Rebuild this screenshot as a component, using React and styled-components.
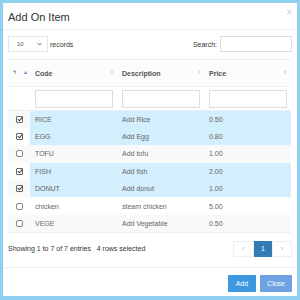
import React from "react";
import styled, { createGlobalStyle } from "styled-components";

const Global = createGlobalStyle`
  html, body { margin: 0; padding: 0; }
  body {
    width: 300px;
    height: 300px;
    background: #8dd0ef;
    font-family: "Liberation Sans", Arial, sans-serif;
    overflow: hidden;
  }
`;

const Modal = styled.div`
  box-sizing: border-box;
  margin: 3px 0 0 3px;
  width: 294px;
  height: 293px;
  background: #fff;
  display: flex;
  flex-direction: column;
`;

const Header = styled.div`
  height: 26px;
  border-bottom: 1px solid #eee;
  display: flex;
  align-items: center;
  justify-content: space-between;
  padding: 0 5px 0 5px;
`;

const Title = styled.div`
  font-size: 11px;
  color: #333;
  margin-top: 1px;
`;

const CloseX = styled.div`
  font-size: 10px;
  color: #ccc;
  margin-top: -8px;
`;

const Body = styled.div`
  padding: 6px 5px 0 5px;
  flex: 1;
`;

const Controls = styled.div`
  display: flex;
  justify-content: space-between;
  align-items: center;
  height: 16px;
  font-size: 7px;
  color: #333;
`;

const Length = styled.div`
  display: flex;
  align-items: center;
  gap: 2px;
`;

const SelectBox = styled.div`
  box-sizing: border-box;
  width: 40px;
  height: 16px;
  border: 1px solid #e3e3e3;
  display: flex;
  align-items: center;
  justify-content: space-between;
  padding: 0 5px 0 8px;
  font-size: 6px;
  color: #555;
`;

const Search = styled.div`
  display: flex;
  align-items: center;
  gap: 3px;
`;

const SearchInput = styled.div`
  box-sizing: border-box;
  width: 72px;
  height: 16px;
  border: 1px solid #ddd;
`;

const Table = styled.table`
  margin-top: 7px;
  width: 283px;
  border-collapse: collapse;
  table-layout: fixed;
  font-size: 7px;
  color: #666;
  border-top: 1px solid #eee;
  border-bottom: 1px solid #eee;
`;

const HeadCell = styled.th`
  height: 26px;
  padding: 0 0 0 5px;
  text-align: left;
  font-weight: bold;
  color: #555;
  position: relative;
  background: #fcfcfc;
  border-bottom: 1px solid #eee;
`;

const SortMark = styled.span`
  position: absolute;
  right: ${(p) => p.$right}px;
  top: 10px;
  font-size: 5px;
  color: ${(p) => p.$color};
  line-height: 1;
`;

const FilterCell = styled.td`
  height: 23px;
  padding: 0 5px;
  border-bottom: 1px solid #eee;
`;

const FilterInput = styled.div`
  box-sizing: border-box;
  height: 18px;
  width: 78px;
  border: 1px solid #ddd;
`;

const Row = styled.tr`
  height: 17.4px;
  background: ${(p) => (p.$striped ? "#f9f9f9" : "#fff")};
`;

const Cell = styled.td`
  padding: 0 0 0 5px;
  background: ${(p) => (p.$selected ? "#d3eefc" : "transparent")};
`;

const CheckCell = styled.td`
  padding: 0 0 0 8px;
`;

const Box = styled.span`
  box-sizing: border-box;
  display: block;
  width: 7px;
  height: 7px;
  border: 1px solid ${(p) => (p.$on ? "#666" : "#888")};
  border-radius: ${(p) => (p.$on ? "1px" : "2px")};
  position: relative;
  background: #fff;
`;

const Tick = styled.svg`
  position: absolute;
  left: -1px;
  top: -2px;
`;

const Bottom = styled.div`
  display: flex;
  justify-content: space-between;
  align-items: center;
  margin-top: 8px;
  height: 16px;
  font-size: 7px;
  color: #333;
`;

const Pager = styled.div`
  display: flex;
  height: 16px;
`;

const Page = styled.div`
  box-sizing: border-box;
  width: ${(p) => p.$w}px;
  height: 16px;
  display: flex;
  align-items: center;
  justify-content: center;
  font-size: 7px;
  border: 1px solid ${(p) => (p.$active ? "#337ab7" : "#eee")};
  background: ${(p) => (p.$active ? "#337ab7" : "#fff")};
  color: ${(p) => (p.$active ? "#fff" : "#aaa")};
`;

const Footer = styled.div`
  box-sizing: border-box;
  border-top: 1px solid #eee;
  height: 29px;
  display: flex;
  justify-content: flex-end;
  align-items: flex-start;
  gap: 4px;
  padding: 7px 5px 0 0;
`;

const Button = styled.div`
  height: 17px;
  padding: 0 ${(p) => p.$pad}px;
  display: flex;
  align-items: center;
  font-size: 7px;
  color: #fff;
  background: ${(p) => p.$bg};
  border-radius: 1px;
`;

const items = [
  ["RICE", "Add Rice", "0.50", true],
  ["EGG", "Add Egg", "0.80", true],
  ["TOFU", "Add tofu", "1.00", false],
  ["FISH", "Add fish", "2.00", true],
  ["DONUT", "Add donut", "1.00", true],
  ["chicken", "steam chicken", "5.00", false],
  ["VEGE", "Add Vegetable", "0.50", false],
];

function Check({ on }) {
  return (
    <Box $on={on}>
      {on && (
        <Tick width="8" height="8" viewBox="0 0 8 8">
          <path d="M1.8 4.2 L3.4 5.8 L6.8 1.8" stroke="#444" strokeWidth="1.1" fill="none" />
        </Tick>
      )}
    </Box>
  );
}

export default function App() {
  return (
    <>
      <Global />
      <Modal>
        <Header>
          <Title>Add On Item</Title>
          <CloseX>×</CloseX>
        </Header>
        <Body>
          <Controls>
            <Length>
              <SelectBox>
                <span>10</span>
                <svg width="5" height="4" viewBox="0 0 5 4">
                  <path d="M0.5 1 L2.5 3 L4.5 1" stroke="#555" strokeWidth="0.9" fill="none" />
                </svg>
              </SelectBox>
              <span>records</span>
            </Length>
            <Search>
              <span>Search:</span>
              <SearchInput />
            </Search>
          </Controls>
          <Table>
            <colgroup>
              <col style={{ width: 22 }} />
              <col style={{ width: 87 }} />
              <col style={{ width: 87 }} />
              <col style={{ width: 87 }} />
            </colgroup>
            <thead>
              <tr>
                <HeadCell>
                  <SortMark $right={14} $color="#555">ϟ</SortMark>
                  <SortMark $right={2} $color="#6d7fd6">▲</SortMark>
                </HeadCell>
                <HeadCell>
                  Code
                  <SortMark $right={3} $color="#ddd">⬍</SortMark>
                </HeadCell>
                <HeadCell>
                  Description
                  <SortMark $right={3} $color="#ddd">⬍</SortMark>
                </HeadCell>
                <HeadCell>
                  Price
                  <SortMark $right={4} $color="#ddd">⬍</SortMark>
                </HeadCell>
              </tr>
              <tr>
                <FilterCell />
                <FilterCell><FilterInput /></FilterCell>
                <FilterCell><FilterInput /></FilterCell>
                <FilterCell><FilterInput /></FilterCell>
              </tr>
            </thead>
            <tbody>
              {items.map(([code, desc, price, sel], i) => (
                <Row key={code} $striped={i % 2 === 0}>
                  <CheckCell><Check on={sel} /></CheckCell>
                  <Cell $selected={sel}>{code}</Cell>
                  <Cell $selected={sel}>{desc}</Cell>
                  <Cell $selected={sel}>{price}</Cell>
                </Row>
              ))}
            </tbody>
          </Table>
          <Bottom>
            <span>Showing 1 to 7 of 7 entries &nbsp;&nbsp;4 rows selected</span>
            <Pager>
              <Page $w={21}>‹</Page>
              <Page $w={18} $active>1</Page>
              <Page $w={20}>›</Page>
            </Pager>
          </Bottom>
        </Body>
        <Footer>
          <Button $bg="#3d97de" $pad={8}>Add</Button>
          <Button $bg="#6fa2e2" $pad={7}>Close</Button>
        </Footer>
      </Modal>
    </>
  );
}
